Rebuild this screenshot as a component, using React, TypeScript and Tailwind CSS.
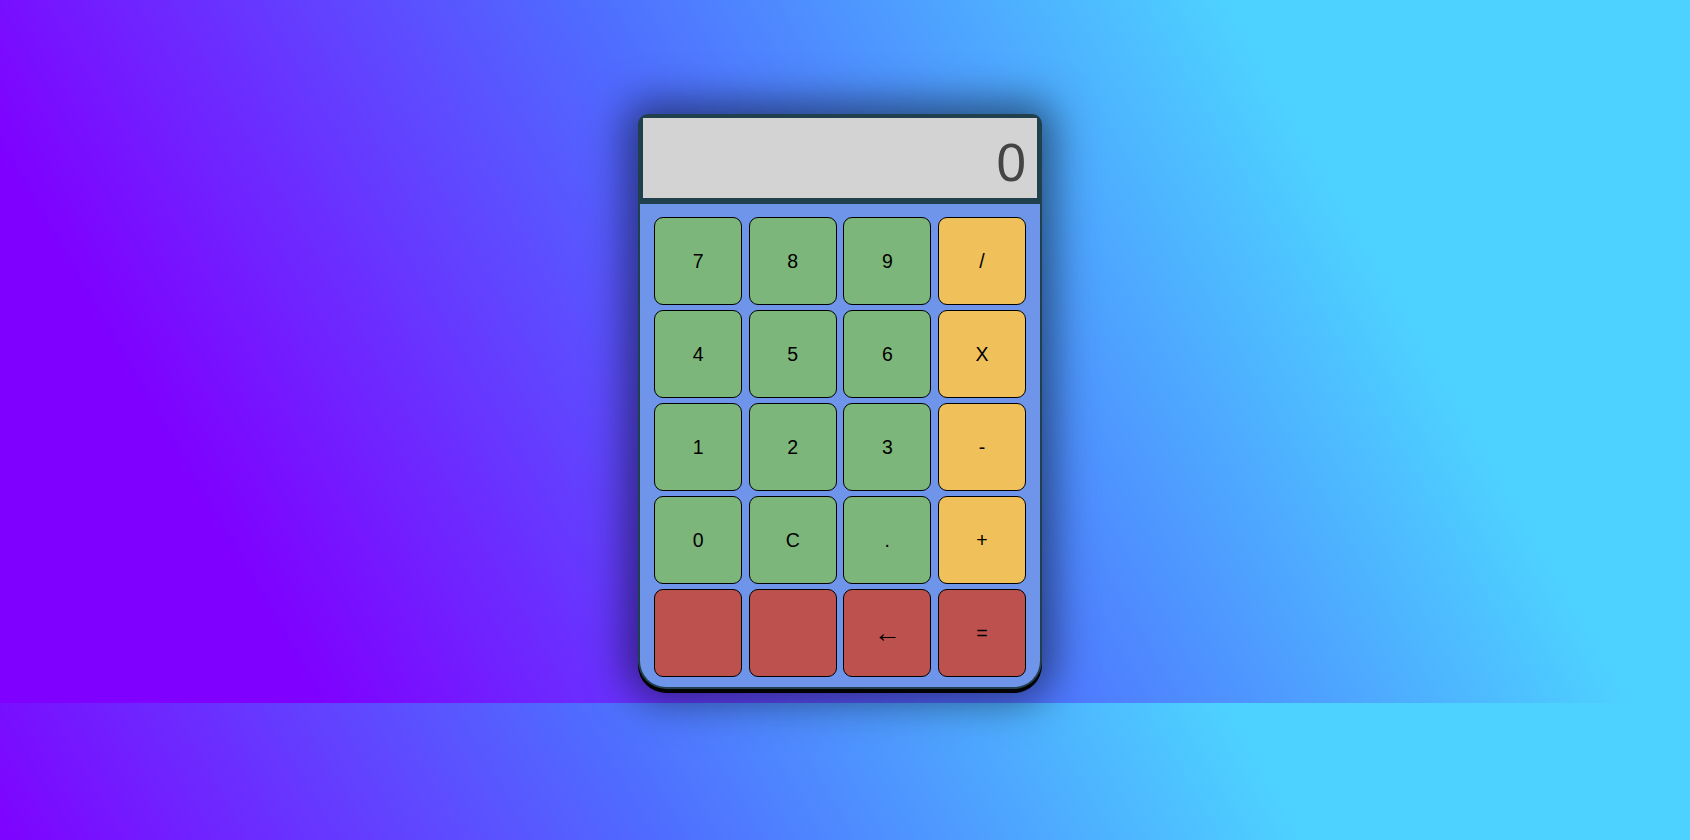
const rows: { label: string; kind: "num" | "op" | "act" }[][] = [
  [
    { label: "7", kind: "num" },
    { label: "8", kind: "num" },
    { label: "9", kind: "num" },
    { label: "/", kind: "op" },
  ],
  [
    { label: "4", kind: "num" },
    { label: "5", kind: "num" },
    { label: "6", kind: "num" },
    { label: "X", kind: "op" },
  ],
  [
    { label: "1", kind: "num" },
    { label: "2", kind: "num" },
    { label: "3", kind: "num" },
    { label: "-", kind: "op" },
  ],
  [
    { label: "0", kind: "num" },
    { label: "C", kind: "num" },
    { label: ".", kind: "num" },
    { label: "+", kind: "op" },
  ],
  [
    { label: "", kind: "act" },
    { label: "", kind: "act" },
    { label: "←", kind: "act" },
    { label: "=", kind: "act" },
  ],
];

const kindClass = {
  num: "bg-[#7db67a]",
  op: "bg-[#f0c05b]",
  act: "bg-[#bd514d]",
};

export default function App() {
  return (
    <div className="h-[840px] w-full bg-[linear-gradient(60deg,#7f00ff_15%,#4f6cff_47%,#4dd2ff_78%)] bg-[length:100%_703px] bg-repeat font-['Liberation_Sans',Arial,sans-serif]">
      <div className="flex justify-center pt-[114px] pr-[10px]">
        <div className="w-[404px] rounded-t-[10px] rounded-b-[28px] bg-[#20404d] pt-[4px] pb-[2px] shadow-[0_4px_0_#000,0_0_40px_12px_rgba(0,0,0,0.5)]">
          {/* display */}
          <div className="mx-[5px] mb-[6px] flex h-[80px] items-center justify-end bg-[#d3d3d3] pt-[9px] pr-[11px] text-[53px] leading-none text-[#444]">
            0
          </div>

          {/* keypad */}
          <div className="mx-[2px] grid grid-cols-4 gap-x-[6.5px] gap-y-[4.6px] rounded-b-[26px] bg-[#6e95ea] px-[14px] pt-[13px] pb-[10px]">
            {rows.flat().map((b, i) => (
              <button
                key={i}
                className={`flex h-[88.4px] items-center justify-center rounded-[9px] border border-black text-black ${
                  b.label === "←" ? "text-[27px]" : "text-[19.5px]"
                } ${kindClass[b.kind]}`}
              >
                {b.label}
              </button>
            ))}
          </div>
        </div>
      </div>
    </div>
  );
}
